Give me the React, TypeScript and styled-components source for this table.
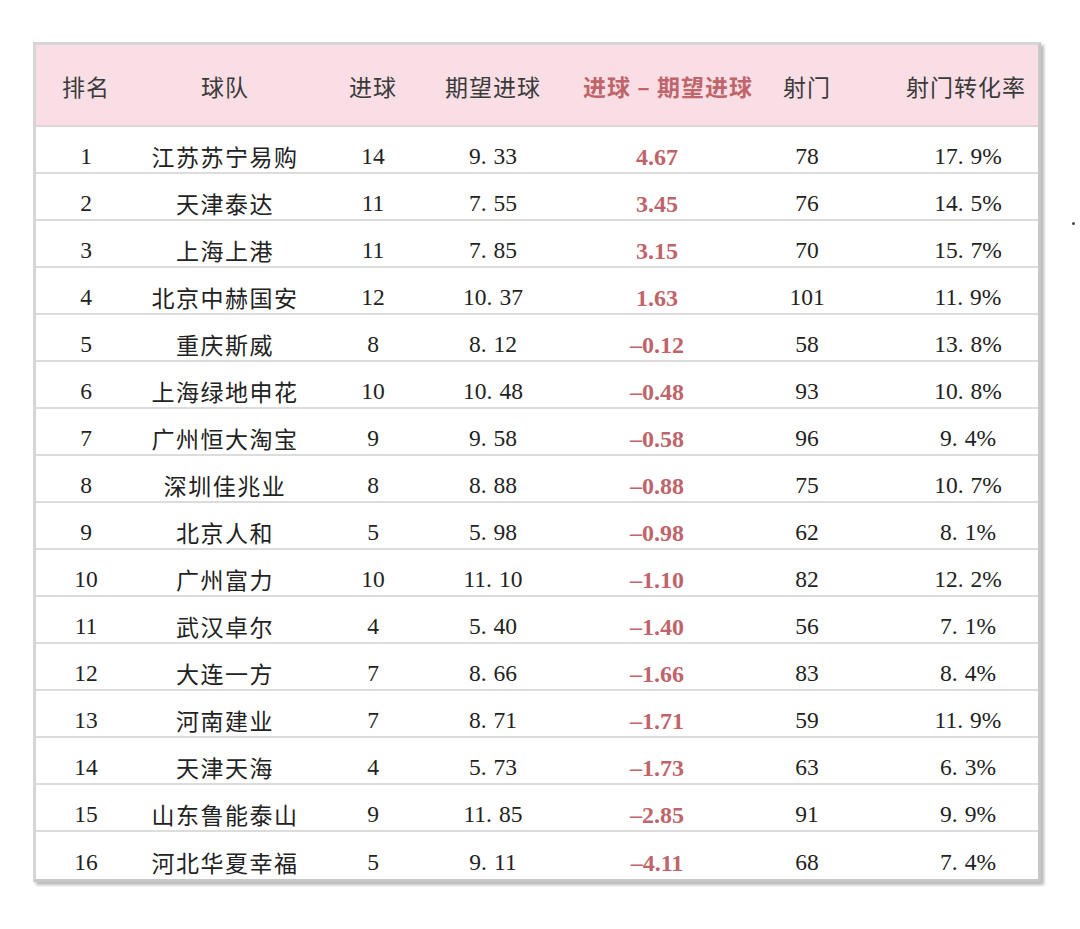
import React from "react";
import styled, { createGlobalStyle } from "styled-components";

const GlobalStyle = createGlobalStyle`
  html, body { margin: 0; padding: 0; background: #ffffff; }
  body { font-family: "Liberation Serif", "Noto Sans CJK SC", serif; color: #222; }
`;

const Page = styled.div`
  display: flex;
  align-items: flex-start;
  padding: 42px 0 0 33px;
  min-height: 887px;
  box-sizing: border-box;
`;

const Table = styled.div`
  width: 1008px;
  box-sizing: border-box;
  border: 3px solid #d6d6d6;
  border-right-color: #c8c8c8;
  border-bottom-color: #c8c8c8;
  box-shadow: 3px 3px 3px rgba(0, 0, 0, 0.28);
  background: #fff;
`;

const COLS = "100px 178px 118px 122px 206px 94px 184px";

const HeaderRow = styled.div`
  display: grid;
  grid-template-columns: ${COLS};
  height: 82px;
  align-items: center;
  background: #f9dfe5;
  border-bottom: 2px solid #e3d3d7;
  box-sizing: border-box;
`;

const HeadCell = styled.div<{ $accent?: boolean; $shift?: number }>`
  text-align: center;
  font-family: "Noto Sans CJK SC", sans-serif;
  font-size: 23px;
  font-weight: ${(p) => (p.$accent ? 700 : 400)};
  color: ${(p) => (p.$accent ? "#c0646b" : "#3a3a3a")};
  padding-left: ${(p) => p.$shift ?? 0}px;
  padding-top: 2px;
  letter-spacing: 1px;
  white-space: nowrap;
`;

const Row = styled.div<{ $last?: boolean }>`
  display: grid;
  grid-template-columns: ${COLS};
  height: 47px;
  align-items: center;
  padding-top: 14px;
  box-sizing: border-box;
  border-bottom: ${(p) => (p.$last ? "none" : "2px solid #dcdcdc")};
`;

const Cell = styled.div<{ $shift?: number; $cjk?: boolean }>`
  text-align: center;
  font-family: ${(p) =>
    p.$cjk ? `"Noto Sans CJK SC", sans-serif` : `"Liberation Serif", serif`};
  font-size: ${(p) => (p.$cjk ? "23px" : "23.5px")};
  letter-spacing: ${(p) => (p.$cjk ? "1.5px" : "0")};
  color: #222;
  padding-left: ${(p) => p.$shift ?? 0}px;
  white-space: nowrap;
  line-height: 1;
`;

const DiffCell = styled.div`
  text-align: center;
  font-family: "Liberation Serif", serif;
  font-size: 24px;
  font-weight: 700;
  color: #c0646b;
  line-height: 1;
  white-space: nowrap;
`;

const Dot = styled.span`
  margin-right: 0.3em;
`;

const Mark = styled.div`
  width: 3px;
  height: 3px;
  border-radius: 50%;
  background: #444;
  margin: 180px 0 0 31px;
`;

type Team = {
  rank: number;
  name: string;
  goals: number;
  xg: string;
  diff: string;
  shots: number;
  rate: string;
};

const teams: Team[] = [
  { rank: 1, name: "江苏苏宁易购", goals: 14, xg: "9.33", diff: "4.67", shots: 78, rate: "17.9%" },
  { rank: 2, name: "天津泰达", goals: 11, xg: "7.55", diff: "3.45", shots: 76, rate: "14.5%" },
  { rank: 3, name: "上海上港", goals: 11, xg: "7.85", diff: "3.15", shots: 70, rate: "15.7%" },
  { rank: 4, name: "北京中赫国安", goals: 12, xg: "10.37", diff: "1.63", shots: 101, rate: "11.9%" },
  { rank: 5, name: "重庆斯威", goals: 8, xg: "8.12", diff: "–0.12", shots: 58, rate: "13.8%" },
  { rank: 6, name: "上海绿地申花", goals: 10, xg: "10.48", diff: "–0.48", shots: 93, rate: "10.8%" },
  { rank: 7, name: "广州恒大淘宝", goals: 9, xg: "9.58", diff: "–0.58", shots: 96, rate: "9.4%" },
  { rank: 8, name: "深圳佳兆业", goals: 8, xg: "8.88", diff: "–0.88", shots: 75, rate: "10.7%" },
  { rank: 9, name: "北京人和", goals: 5, xg: "5.98", diff: "–0.98", shots: 62, rate: "8.1%" },
  { rank: 10, name: "广州富力", goals: 10, xg: "11.10", diff: "–1.10", shots: 82, rate: "12.2%" },
  { rank: 11, name: "武汉卓尔", goals: 4, xg: "5.40", diff: "–1.40", shots: 56, rate: "7.1%" },
  { rank: 12, name: "大连一方", goals: 7, xg: "8.66", diff: "–1.66", shots: 83, rate: "8.4%" },
  { rank: 13, name: "河南建业", goals: 7, xg: "8.71", diff: "–1.71", shots: 59, rate: "11.9%" },
  { rank: 14, name: "天津天海", goals: 4, xg: "5.73", diff: "–1.73", shots: 63, rate: "6.3%" },
  { rank: 15, name: "山东鲁能泰山", goals: 9, xg: "11.85", diff: "–2.85", shots: 91, rate: "9.9%" },
  { rank: 16, name: "河北华夏幸福", goals: 5, xg: "9.11", diff: "–4.11", shots: 68, rate: "7.4%" },
];

const Decimal: React.FC<{ value: string }> = ({ value }) => {
  const i = value.indexOf(".");
  if (i < 0) return <>{value}</>;
  return (
    <>
      {value.slice(0, i)}
      <Dot>.</Dot>
      {value.slice(i + 1)}
    </>
  );
};

export default function App() {
  return (
    <>
      <GlobalStyle />
      <Page>
        <Table>
          <HeaderRow>
            <HeadCell>排名</HeadCell>
            <HeadCell>球队</HeadCell>
            <HeadCell>进球</HeadCell>
            <HeadCell>期望进球</HeadCell>
            <HeadCell $accent $shift={22}>进球 – 期望进球</HeadCell>
            <HeadCell>射门</HeadCell>
            <HeadCell $shift={40}>射门转化率</HeadCell>
          </HeaderRow>
          {teams.map((t, idx) => (
            <Row key={t.rank} $last={idx === teams.length - 1}>
              <Cell>{t.rank}</Cell>
              <Cell $cjk>{t.name}</Cell>
              <Cell>{t.goals}</Cell>
              <Cell>
                <Decimal value={t.xg} />
              </Cell>
              <DiffCell>{t.diff}</DiffCell>
              <Cell>{t.shots}</Cell>
              <Cell $shift={44}>
                <Decimal value={t.rate} />
              </Cell>
            </Row>
          ))}
        </Table>
        <Mark />
      </Page>
    </>
  );
}
